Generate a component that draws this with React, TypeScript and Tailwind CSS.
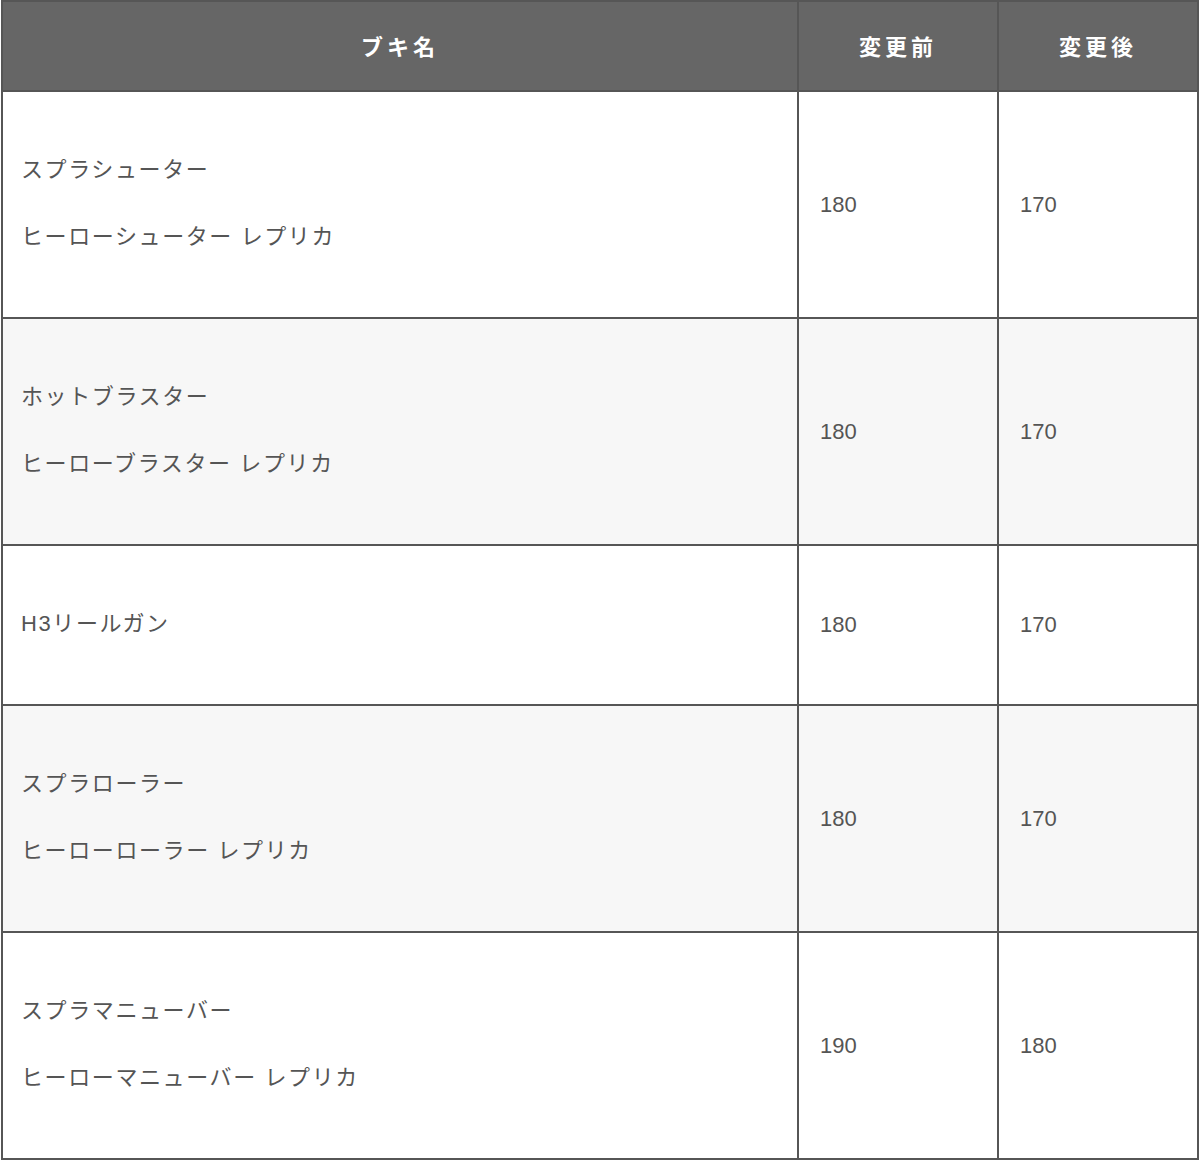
import React from 'react';

type Row = { names: string[]; before: string; after: string };

const rows: Row[] = [
  { names: ['スプラシューター', 'ヒーローシューター レプリカ'], before: '180', after: '170' },
  { names: ['ホットブラスター', 'ヒーローブラスター レプリカ'], before: '180', after: '170' },
  { names: ['H3リールガン'], before: '180', after: '170' },
  { names: ['スプラローラー', 'ヒーローローラー レプリカ'], before: '180', after: '170' },
  { names: ['スプラマニューバー', 'ヒーローマニューバー レプリカ'], before: '190', after: '180' },
];

const font = { fontFamily: '"Liberation Sans", "Noto Sans CJK JP", sans-serif' };

export default function App() {
  return (
    <div className="bg-white w-[1200px] h-[1162px] pl-[1px]" style={font}>
      <table className="table-fixed border-collapse w-[1196px] border-2 border-[#565656]">
        <colgroup>
          <col className="w-[796px]" />
          <col className="w-[200px]" />
          <col className="w-[200px]" />
        </colgroup>
        <thead>
          <tr className="bg-[#666666] text-white h-[90px]">
            {['ブキ名', '変更前', '変更後'].map((h) => (
              <th
                key={h}
                className="border-2 border-[#565656] text-center text-[22px] font-bold tracking-[4px] pt-[2px]"
              >
                {h}
              </th>
            ))}
          </tr>
        </thead>
        <tbody className="text-[#555555] text-[22px]">
          {rows.map((r, i) => (
            <tr key={i} className={i % 2 === 1 ? 'bg-[#f7f7f7]' : 'bg-white'}>
              <td className="border-2 border-[#565656] pl-[18px] pr-4 pt-[61px] pb-[63px] align-middle">
                <div className="flex flex-col gap-[33px]">
                  {r.names.map((n) => (
                    <p key={n} className="leading-[34px] tracking-[1.6px]">
                      {n}
                    </p>
                  ))}
                </div>
              </td>
              <td className="border-2 border-[#565656] pl-[21px] align-middle leading-[34px]">
                {r.before}
              </td>
              <td className="border-2 border-[#565656] pl-[21px] align-middle leading-[34px]">
                {r.after}
              </td>
            </tr>
          ))}
        </tbody>
      </table>
    </div>
  );
}
